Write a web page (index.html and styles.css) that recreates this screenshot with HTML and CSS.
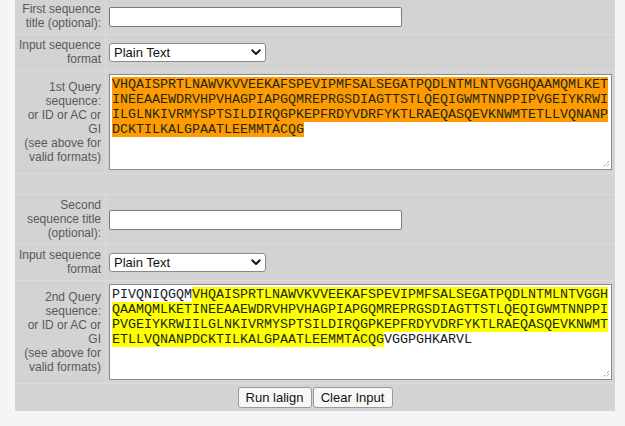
FILE: index.html
```html
<!DOCTYPE html>
<html>
<head>
<meta charset="utf-8">
<title>lalign</title>
<link rel="stylesheet" href="styles.css">
</head>
<body>
<div class="form">
  <div class="label">First sequence<br>title (optional):</div>
  <div class="field"><input class="text" type="text"></div>

  <div class="label">Input sequence<br>format</div>
  <div class="field">
    <div class="select-wrap">
      <select class="select"><option>Plain Text</option></select>
      <svg class="chev" width="10" height="7" viewBox="0 0 10 7"><path d="M1.2 1.3 L5 5 L8.8 1.3" fill="none" stroke="#111" stroke-width="1.9" stroke-linecap="round" stroke-linejoin="round"/></svg>
    </div>
  </div>

  <div class="label">1st Query<br>sequence:<br>or ID or AC or<br>GI<br>(see above for<br>valid formats)</div>
  <div class="field">
    <div class="seqbox"><mark class="orange">VHQAISPRTLNAWVKVVEEKAFSPEVIPMFSALSEGATPQDLNTMLNTVGGHQAAMQMLKETINEEAAEWDRVHPVHAGPIAPGQMREPRGSDIAGTTSTLQEQIGWMTNNPPIPVGEIYKRWIILGLNKIVRMYSPTSILDIRQGPKEPFRDYVDRFYKTLRAEQASQEVKNWMTETLLVQNANPDCKTILKALGPAATLEEMMTACQG</mark><svg class="grip" width="9" height="9" viewBox="0 0 9 9"><path d="M8 2 L2 8 M8 5 L5 8" stroke="#777" stroke-width="1" stroke-dasharray="1 1"/></svg></div>
  </div>

  <div class="spacer">&nbsp;</div>

  <div class="label">Second<br>sequence title<br>(optional):</div>
  <div class="field"><input class="text" type="text"></div>

  <div class="label">Input sequence<br>format</div>
  <div class="field">
    <div class="select-wrap">
      <select class="select"><option>Plain Text</option></select>
      <svg class="chev" width="10" height="7" viewBox="0 0 10 7"><path d="M1.2 1.3 L5 5 L8.8 1.3" fill="none" stroke="#111" stroke-width="1.9" stroke-linecap="round" stroke-linejoin="round"/></svg>
    </div>
  </div>

  <div class="label">2nd Query<br>sequence:<br>or ID or AC or<br>GI<br>(see above for<br>valid formats)</div>
  <div class="field">
    <div class="seqbox">PIVQNIQGQM<mark class="yellow">VHQAISPRTLNAWVKVVEEKAFSPEVIPMFSALSEGATPQDLNTMLNTVGGHQAAMQMLKETINEEAAEWDRVHPVHAGPIAPGQMREPRGSDIAGTTSTLQEQIGWMTNNPPIPVGEIYKRWIILGLNKIVRMYSPTSILDIRQGPKEPFRDYVDRFYKTLRAEQASQEVKNWMTETLLVQNANPDCKTILKALGPAATLEEMMTACQG</mark>VGGPGHKARVL<svg class="grip" width="9" height="9" viewBox="0 0 9 9"><path d="M8 2 L2 8 M8 5 L5 8" stroke="#777" stroke-width="1" stroke-dasharray="1 1"/></svg></div>
  </div>

  <div class="buttons">
    <button class="btn" type="button">Run lalign</button><button class="btn" type="button">Clear Input</button>
  </div>
</div>
</body>
</html>
```

FILE: styles.css
```css
html, body {
  margin: 0;
  padding: 0;
  background: #f4f5f7;
}
body {
  font-family: "Liberation Sans", Arial, sans-serif;
  font-size: 12px;
}
.form {
  display: grid;
  grid-template-columns: 90px 509px;
  gap: 1px;
  width: 600px;
  margin: -1px 0 0 15px;
  background: #dcdcdc;
}
.label {
  background: #d3d3d3;
  color: #595959;
  text-align: right;
  line-height: 14px;
  padding: 3px 4px 4px 2px;
  display: flex;
  align-items: center;
  justify-content: flex-end;
}
.field {
  background: #d3d3d3;
  padding: 3px;
  display: flex;
  align-items: center;
}
.spacer {
  grid-column: 1 / 3;
  background: #d3d3d3;
  line-height: 14px;
  padding: 3px;
}
.text {
  box-sizing: border-box;
  width: 293px;
  height: 20px;
  margin: 0;
  border: 1px solid #7a7a7a;
  border-radius: 2px;
  background: #fff;
  padding: 0 3px;
  font: 13px "Liberation Sans", Arial, sans-serif;
}
.select-wrap {
  position: relative;
  width: 157px;
  height: 19px;
}
.select {
  appearance: none;
  -webkit-appearance: none;
  box-sizing: border-box;
  width: 157px;
  height: 19px;
  margin: 0;
  border: 1px solid #8a8a8a;
  border-radius: 3px;
  background: #fff;
  color: #111;
  padding: 0 0 0 4px;
  font: 13px "Liberation Sans", Arial, sans-serif;
  line-height: 17px;
}
.chev {
  position: absolute;
  right: 5px;
  top: 6px;
  pointer-events: none;
}
.seqbox {
  position: relative;
  box-sizing: border-box;
  width: 503px;
  height: 96px;
  border: 1px solid #8a8a8a;
  background: #fff;
  padding: 2px;
  font-family: "Liberation Mono", "Courier New", monospace;
  font-size: 13.333px;
  line-height: 15px;
  color: #151a28;
  word-break: break-all;
  overflow: hidden;
}
mark {
  color: #1a2a12;
}
.orange {
  background: #ff9a00;
}
.yellow {
  background: #ffff00;
}
.grip {
  position: absolute;
  right: 1px;
  bottom: 1px;
}
.buttons {
  grid-column: 1 / 3;
  background: #d3d3d3;
  padding: 3px;
  display: flex;
  justify-content: center;
  gap: 1px;
  height: 21px;
}
.btn {
  height: 21px;
  margin: 0;
  padding: 0 7px;
  border: 1px solid #9a9a9a;
  border-radius: 3px;
  background: #f7f7f7;
  color: #111;
  font: 13px "Liberation Sans", Arial, sans-serif;
}
.btn:first-child {
  width: 74px;
}
.btn:last-child {
  width: 80px;
}
```
